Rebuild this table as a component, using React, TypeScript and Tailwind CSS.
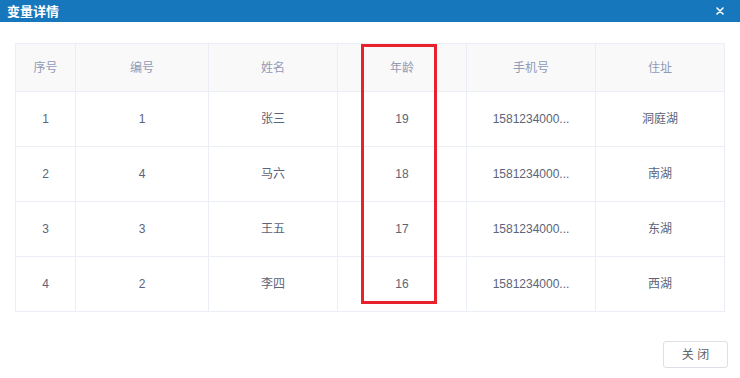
import React from 'react';

interface Row {
  idx: number;
  code: string;
  name: string;
  age: string;
  phone: string;
  addr: string;
}

const ROWS: Row[] = [
  { idx: 1, code: '1', name: '张三', age: '19', phone: '1581234000...', addr: '洞庭湖' },
  { idx: 2, code: '4', name: '马六', age: '18', phone: '1581234000...', addr: '南湖' },
  { idx: 3, code: '3', name: '王五', age: '17', phone: '1581234000...', addr: '东湖' },
  { idx: 4, code: '2', name: '李四', age: '16', phone: '1581234000...', addr: '西湖' },
];

const HEADERS = ['序号', '编号', '姓名', '年龄', '手机号', '住址'];
const WIDTHS = [60, 133, 129, 129, 129, 129];

export default function App() {
  return (
    <div
      className="w-[740px] h-[378px] bg-white overflow-hidden flex flex-col"
      style={{ fontFamily: '"Liberation Sans", "Noto Sans CJK SC", sans-serif' }}
    >
      <div className="h-[22px] bg-[#1777bd] flex items-center justify-between pl-[7px] pr-[16px] shrink-0">
        <span className="text-white text-[13px] font-bold leading-none">变量详情</span>
        <svg width="8" height="8" viewBox="0 0 8 8" className="text-white">
          <path d="M1 1L7 7M7 1L1 7" stroke="currentColor" strokeWidth="1.6" strokeLinecap="round" />
        </svg>
      </div>

      <div className="relative pt-[21px] pl-[15px]">
        <table className="border-collapse table-fixed text-[12px]" style={{ width: 709 }}>
          <colgroup>
            {WIDTHS.map((w, i) => (
              <col key={i} style={{ width: w }} />
            ))}
          </colgroup>
          <thead>
            <tr className="h-[48px] bg-[#f9f9fa]">
              {HEADERS.map(h => (
                <th key={h} className="border border-[#ebeef5] font-normal text-[#909bb5] text-center">
                  {h}
                </th>
              ))}
            </tr>
          </thead>
          <tbody>
            {ROWS.map(r => (
              <tr key={r.idx} className="h-[55px]">
                {[String(r.idx), r.code, r.name, r.age, r.phone, r.addr].map((v, i) => (
                  <td key={i} className="border border-[#ebeef5] text-center text-[#5b6478]">
                    {v}
                  </td>
                ))}
              </tr>
            ))}
          </tbody>
        </table>
        <div className="absolute left-[361px] top-[22px] w-[76px] h-[260px] border-[3px] border-[#e8212b] pointer-events-none" />
      </div>

      <div className="flex justify-end pr-[12px] pt-[29px]">
        <button className="w-[65px] h-[27px] border border-[#dcdfe6] rounded-[3px] bg-white text-[12px] text-[#606266]">
          关 闭
        </button>
      </div>
    </div>
  );
}
